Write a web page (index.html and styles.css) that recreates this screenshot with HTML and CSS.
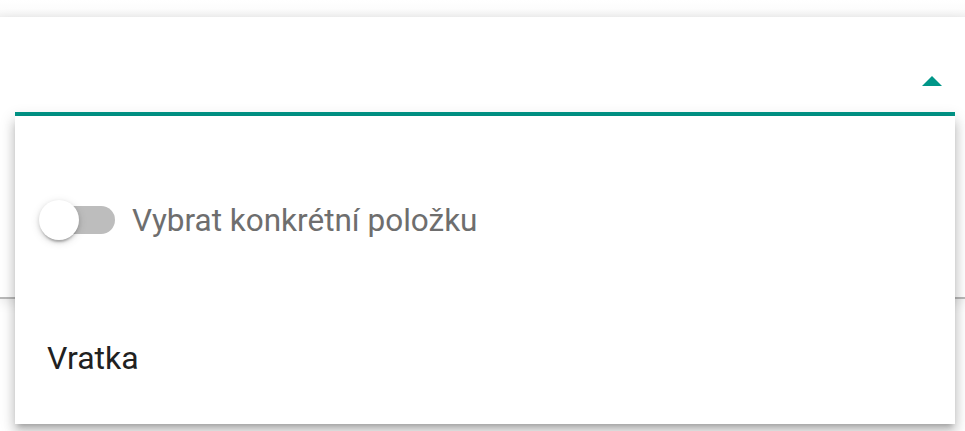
FILE: index.html
```html
<!DOCTYPE html>
<html lang="cs">
<head>
<meta charset="utf-8">
<title>Výběr</title>
<link rel="stylesheet" href="styles.css">
</head>
<body>
<div class="topbar"></div>
<div class="panel">
  <div class="select">
    <div class="select-value"></div>
    <div class="select-arrow"></div>
  </div>
</div>
<div class="below"></div>
<div class="menu">
  <div class="menu-row toggle-row">
    <div class="switch">
      <div class="switch-track"></div>
      <div class="switch-thumb"></div>
    </div>
    <span class="switch-label">Vybrat konkrétní položku</span>
  </div>
  <div class="menu-row option-row">
    <span class="option-text">Vratka</span>
  </div>
</div>
</body>
</html>
```

FILE: styles.css
```css
html, body {
  margin: 0;
  padding: 0;
  background: #ffffff;
}
body {
  width: 965px;
  height: 431px;
  overflow: hidden;
  position: relative;
  font-family: Roboto, "Liberation Sans", Arial, sans-serif;
}
.topbar {
  height: 17px;
  background: linear-gradient(to bottom, #ffffff 0%, #fcfcfc 55%, #f3f3f3 100%);
}
.panel {
  height: 280px;
  background: #ffffff;
  border-bottom: 2px solid #b9b9b9;
  box-shadow: 0 3px 12px rgba(0, 0, 0, 0.10);
  padding: 0 10px 0 15px;
}
.select {
  height: 99px;
  border-bottom: 4px solid #009688;
  display: flex;
  align-items: flex-start;
  justify-content: space-between;
  box-sizing: border-box;
}
.select-value {
  flex: 1;
}
.select-arrow {
  width: 0;
  height: 0;
  margin-top: 59px;
  margin-right: 13px;
  border-left: 10px solid transparent;
  border-right: 10px solid transparent;
  border-bottom: 10px solid #009688;
}
.below {
  height: 132px;
}
.menu {
  position: absolute;
  left: 15px;
  top: 116px;
  width: 940px;
  height: 308px;
  background: #ffffff;
  box-shadow: 0 5px 5px -3px rgba(0, 0, 0, 0.2), 0 8px 10px 1px rgba(0, 0, 0, 0.14), 0 3px 14px 2px rgba(0, 0, 0, 0.12);
  display: flex;
  flex-direction: column;
}
.menu-row {
  display: flex;
  align-items: center;
  padding: 0 32px;
}
.toggle-row {
  margin-top: 32px;
  height: 144px;
  padding-left: 24px;
}
.option-row {
  height: 132px;
}
.switch {
  position: relative;
  width: 76px;
  height: 40px;
  flex: none;
}
.switch-track {
  position: absolute;
  left: 8px;
  top: 6px;
  width: 68px;
  height: 28px;
  border-radius: 14px;
  background: #bdbdbd;
}
.switch-thumb {
  position: absolute;
  left: 0;
  top: 0;
  width: 40px;
  height: 40px;
  border-radius: 50%;
  background: #ffffff;
  box-shadow: 0 4px 2px -2px rgba(0, 0, 0, 0.2), 0 2px 4px 0 rgba(0, 0, 0, 0.14), 0 2px 10px 0 rgba(0, 0, 0, 0.12);
}
.switch-label {
  margin-left: 17px;
  font-size: 31.5px;
  color: #6e6e6e;
  white-space: nowrap;
}
.option-text {
  font-size: 32px;
  color: #212121;
}
```
